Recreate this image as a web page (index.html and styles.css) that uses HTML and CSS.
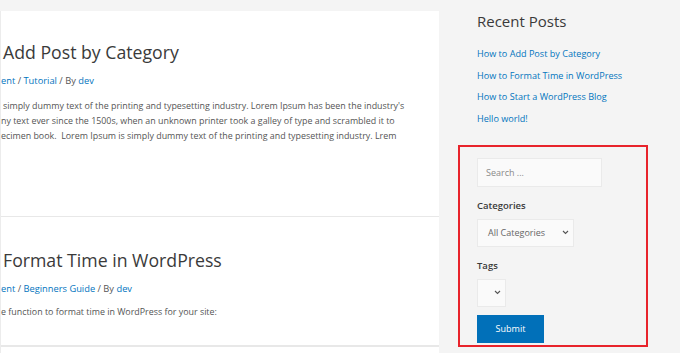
FILE: index.html
```html
<!DOCTYPE html>
<html lang="en">
<head>
<meta charset="UTF-8">
<title>Blog</title>
<link rel="stylesheet" href="styles.css">
</head>
<body>

<div class="page">
    <main class="content">
        <article class="post first">
            <h2 class="post-title indent">Add Post by Category</h2>
            <div class="post-meta"><a href="#">ent</a> / <a href="#">Tutorial</a> / By <a href="#">dev</a></div>
            <div class="post-body">
                <p class="indent">simply dummy text of the printing and typesetting industry. Lorem Ipsum has been the industry's</p>
                <p>ny text ever since the 1500s, when an unknown printer took a galley of type and scrambled it to</p>
                <p>ecimen book.&nbsp; Lorem Ipsum is simply dummy text of the printing and typesetting industry. Lrem</p>
            </div>
        </article>

        <article class="post second">
            <h2 class="post-title indent">Format Time in WordPress</h2>
            <div class="post-meta"><a href="#">ent</a> / <a href="#">Beginners Guide</a> / By <a href="#">dev</a></div>
            <div class="post-body">
                <p>e function to format time in WordPress for your site:</p>
            </div>
        </article>

        <article class="post"></article>
    </main>

    <aside class="sidebar">
        <section class="widget recent">
            <h3 class="widget-title">Recent Posts</h3>
            <ul>
                <li><a href="#">How to Add Post by Category</a></li>
                <li><a href="#">How to Format Time in WordPress</a></li>
                <li><a href="#">How to Start a WordPress Blog</a></li>
                <li><a href="#">Hello world!</a></li>
            </ul>
        </section>

        <form class="filter-box">
            <div class="field search">Search ...</div>

            <label class="field-label">Categories</label>
            <div class="field dropdown cat">
                <span>All Categories</span>
                <svg width="7" height="5" viewBox="0 0 7 5"><path d="M1 1l2.5 2.5L6 1" fill="none" stroke="#555" stroke-width="1.1"/></svg>
            </div>

            <label class="field-label">Tags</label>
            <div class="field dropdown tags">
                <span></span>
                <svg width="7" height="5" viewBox="0 0 7 5"><path d="M1 1l2.5 2.5L6 1" fill="none" stroke="#555" stroke-width="1.1"/></svg>
            </div>

            <div class="submit-btn">Submit</div>
        </form>
    </aside>
</div>

</body>
</html>
```

FILE: styles.css
```css
body {
    margin: 0;
    font-family: 'Open Sans', 'Noto Sans', sans-serif;
    background: #f4f4f4;
    color: #3a3a3a;
    overflow: hidden;
}
a {
    color: #0274be;
    text-decoration: none;
}
.page {
    display: flex;
    height: 353px;
}
.content {
    width: 438px;
    margin-top: 11px;
    background: #fff;
    border-left: 1px solid #ececec;
    overflow: hidden;
}
.post {
    border-bottom: 1px solid #e8e8e8;
    white-space: nowrap;
}
.post.first {
    padding: 30px 0 73px;
}
.post.second {
    padding: 32px 0 26px;
}
.indent {
    padding-left: 2px;
}
.post-title {
    margin: 0;
    font-size: 17.7px;
    font-weight: 400;
    line-height: 22px;
    color: #3a3a3a;
}
.post-meta {
    margin-top: 10px;
    font-size: 9.3px;
    line-height: 15px;
    color: #555;
}
.post-body {
    margin-top: 10px;
    font-size: 8.9px;
    line-height: 15px;
    color: #555;
}
.post.second .post-body {
    margin-top: 8px;
}
.post-body p {
    margin: 0;
}
.sidebar {
    flex: 1;
    padding: 12px 0 0 19px;
}
.widget.recent {
    padding-left: 19px;
}
.widget-title {
    margin: 0;
    font-size: 15px;
    font-weight: 500;
    line-height: 18px;
    color: #3a3a3a;
}
.recent ul {
    list-style: none;
    margin: 13px 0 0;
    padding: 0;
}
.recent li {
    font-size: 9.1px;
    line-height: 21.7px;
}
.filter-box {
    width: 190px;
    margin-top: 15px;
    padding: 11px 0 2px 17px;
    border: 2px solid #e8232b;
    box-sizing: border-box;
    display: flex;
    flex-direction: column;
    align-items: flex-start;
}
.field {
    box-sizing: border-box;
    background: #fafafa;
    border: 1px solid #eaeaea;
    font-size: 9px;
}
.search {
    width: 125px;
    height: 29px;
    padding-left: 8px;
    line-height: 27px;
    color: #8a8a8a;
}
.field-label {
    margin-top: 12px;
    font-size: 9.5px;
    font-weight: 600;
    line-height: 14px;
    color: #3a3a3a;
}
.dropdown {
    margin-top: 6px;
    height: 28px;
    display: flex;
    align-items: center;
    justify-content: space-between;
    color: #666;
}
.dropdown.cat {
    width: 97px;
    padding: 0 4px 0 10px;
}
.dropdown.tags {
    width: 29px;
    padding: 0 4px 0 0;
}
.submit-btn {
    margin-top: 8px;
    width: 67px;
    height: 28px;
    background: #0170b9;
    color: #fff;
    font-size: 9px;
    line-height: 28px;
    text-align: center;
}
```
